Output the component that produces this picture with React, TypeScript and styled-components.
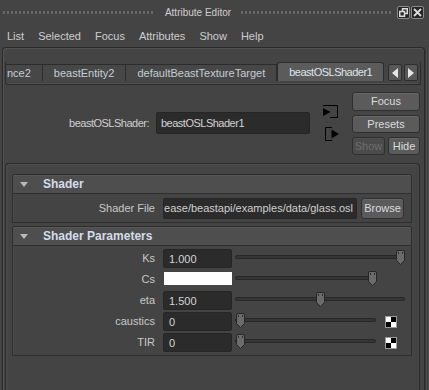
import styled, { createGlobalStyle } from 'styled-components';

const GlobalStyle = createGlobalStyle`
  html, body {
    margin: 0;
    padding: 0;
    background: #444444;
  }
  body {
    font-family: "Liberation Sans", Arial, sans-serif;
    font-size: 11px;
    color: #c8c8c8;
  }
`;

const Window = styled.div`
  width: 429px;
  height: 390px;
  overflow: hidden;
  background: #444444;
  display: flex;
  flex-direction: column;
`;

const TitleBar = styled.div`
  height: 24px;
  display: flex;
  align-items: center;
  padding: 0 5px 0 3px;
  box-sizing: border-box;
  flex-shrink: 0;
`;

const Grip = styled.div`
  flex: 1;
  height: 3px;
  background-image: repeating-linear-gradient(90deg, #686868 0 2px, transparent 2px 4px);
`;

const TitleText = styled.div`
  font-size: 10px;
  color: #cfcfcf;
  padding: 0 10px;
  white-space: nowrap;
`;

const WinBtn = styled.div<{ $first?: boolean }>`
  width: 13px;
  height: 13px;
  box-sizing: border-box;
  border: 1px solid #8a8a8a;
  border-radius: 2px;
  background: #262626;
  margin-left: ${(p) => (p.$first ? '4px' : '1px')};
  display: flex;
  align-items: center;
  justify-content: center;
`;

const MenuBar = styled.div`
  height: 23px;
  display: flex;
  align-items: center;
  gap: 14px;
  padding-left: 7px;
  flex-shrink: 0;
`;

const MenuItem = styled.span`
  color: #cdcdcd;
`;

const Body = styled.div`
  flex: 1;
  display: flex;
  min-height: 0;
`;

const Frame = styled.div`
  margin-left: 2px;
  width: 423px;
  box-sizing: border-box;
  border: 1px solid #2a2a2a;
  border-bottom: none;
  border-radius: 4px 4px 0 0;
  box-shadow: inset 1px 1px 0 #535353;
  padding: 14px 2px 0 2px;
  display: flex;
  flex-direction: column;
`;

const Gutter = styled.div`
  flex: 1;
  background: linear-gradient(90deg, #3a3a3a 0 1px, #4c4c4c 1px 2px, #3c3c3c 2px 3px, #505050 3px);
`;

const TabStrip = styled.div`
  height: 23px;
  display: flex;
  box-sizing: border-box;
  border: 1px solid #2c2c2c;
  border-top: none;
  border-radius: 0 0 3px 3px;
  box-shadow: inset 0 -1px 0 #505050;
  margin-right: 1px;
  flex-shrink: 0;
`;

const TabScroller = styled.div`
  flex: 1;
  display: flex;
  align-items: flex-start;
  overflow: hidden;
`;

const Tab = styled.div<{ $active?: boolean; $clipped?: boolean }>`
  flex-shrink: 0;
  box-sizing: border-box;
  height: ${(p) => (p.$active ? '19px' : '17px')};
  margin-top: ${(p) => (p.$active ? '0' : '2px')};
  line-height: ${(p) => (p.$active ? '18px' : '16px')};
  padding: 0 11px 0 ${(p) => (p.$clipped ? '1px' : '11px')};
  border-top: 1px solid #2c2c2c;
  border-right: 1px solid #2c2c2c;
  border-left: ${(p) => (p.$active ? '1px solid #2c2c2c' : 'none')};
  border-radius: ${(p) => (p.$active ? '3px 3px 0 0' : '0')};
  background: ${(p) => (p.$active ? '#5b5b5b' : '#474747')};
  color: ${(p) => (p.$active ? '#dfe4ea' : '#c6cdd5')};
  letter-spacing: ${(p) => (p.$active ? '-0.5px' : '0')};
  white-space: nowrap;
`;

const ArrowBtn = styled.div`
  width: 14px;
  height: 17px;
  margin: 2px 0 0 2px;
  box-sizing: border-box;
  border: 1px solid #2e2e2e;
  border-radius: 2px;
  background: #575757;
  display: flex;
  align-items: center;
  justify-content: center;
  &:last-child {
    margin-right: 2px;
  }
`;

const Arrow = styled.div<{ $dir: 'left' | 'right' }>`
  width: 0;
  height: 0;
  border-top: 5px solid transparent;
  border-bottom: 5px solid transparent;
  ${(p) => (p.$dir === 'left' ? 'border-right: 6px solid #e6e6e6;' : 'border-left: 6px solid #e6e6e6;')}
`;

const HeaderArea = styled.div`
  height: 76px;
  display: flex;
  align-items: center;
  flex-shrink: 0;
`;

const NodeLabel = styled.div`
  width: 144px;
  text-align: right;
  letter-spacing: -0.5px;
  color: #cfcfcf;
`;

const NodeField = styled.div`
  margin-left: 7px;
  width: 154px;
  height: 22px;
  box-sizing: border-box;
  background: #2b2b2b;
  border: 1px solid #252525;
  border-radius: 2px;
  padding-left: 4px;
  line-height: 20px;
  letter-spacing: -0.5px;
  color: #d2d2d2;
`;

const IconCol = styled.div`
  margin-left: 12px;
  width: 18px;
  display: flex;
  flex-direction: column;
  gap: 9px;
`;

const ButtonCol = styled.div`
  margin-left: 12px;
  width: 68px;
  display: flex;
  flex-direction: column;
  gap: 4px;
`;

const ButtonRow = styled.div`
  display: flex;
  gap: 3px;
`;

const Btn = styled.div<{ $h?: number; $w?: number; $disabled?: boolean }>`
  height: ${(p) => p.$h ?? 18}px;
  width: ${(p) => (p.$w ? `${p.$w}px` : 'auto')};
  box-sizing: border-box;
  border: 1px solid #2f2f2f;
  border-radius: 3px;
  background: ${(p) => (p.$disabled ? '#4b4b4b' : '#5b5b5b')};
  box-shadow: inset 0 1px 0 ${(p) => (p.$disabled ? '#505050' : '#666666')};
  color: ${(p) => (p.$disabled ? '#6e6e6e' : '#dcdcdc')};
  display: flex;
  align-items: center;
  justify-content: center;
  flex-shrink: 0;
`;

const BrowseBtn = styled(Btn)`
  margin-left: 4px;
`;

const ScrollFrame = styled.div`
  flex: 1;
  margin: 2px 2px 0 0;
  border: 1px solid #2b2b2b;
  border-bottom: none;
  border-radius: 4px 4px 0 0;
  box-shadow: inset 1px 1px 0 #4f4f4f;
  padding: 10px 7px 0 6px;
`;

const Section = styled.div<{ $gap?: number }>`
  margin-top: ${(p) => p.$gap ?? 0}px;
`;

const SectionHeader = styled.div`
  height: 20px;
  box-sizing: border-box;
  border: 1px solid #2e2e2e;
  border-radius: 2px 2px 0 0;
  background: #4e4e4e;
  box-shadow: inset 0 1px 0 #585858;
  display: flex;
  align-items: center;
  padding-left: 7px;
`;

const Caret = styled.div`
  width: 0;
  height: 0;
  border-left: 4px solid transparent;
  border-right: 4px solid transparent;
  border-top: 5px solid #b9b9b9;
`;

const SectionTitle = styled.div`
  margin-left: 15px;
  font-weight: bold;
  font-size: 12px;
  color: #d5dde8;
`;

const SectionBody = styled.div<{ $pad?: string }>`
  border: 1px solid #2e2e2e;
  border-top: none;
  box-shadow: inset 1px 0 0 #4c4c4c;
  padding: ${(p) => p.$pad ?? '0'};
`;

const FileRow = styled.div`
  height: 28px;
  display: flex;
  align-items: center;
`;

const AttrLabel = styled.div`
  width: 142px;
  flex-shrink: 0;
  text-align: right;
  line-height: 19px;
  color: #c8c8c8;
`;

const FileField = styled.div`
  margin-left: 8px;
  width: 194px;
  height: 21px;
  box-sizing: border-box;
  background: #2b2b2b;
  border: 1px solid #262626;
  border-radius: 2px;
  padding: 0 3px 0 1px;
  display: flex;
  justify-content: flex-end;
  overflow: hidden;
  line-height: 19px;
  white-space: nowrap;
  color: #d0d0d0;
`;

const AttrRow = styled.div`
  height: 21px;
  display: flex;
  align-items: flex-start;
`;

const ValueField = styled.div`
  margin-left: 8px;
  width: 69px;
  height: 19px;
  box-sizing: border-box;
  background: #2b2b2b;
  border: 1px solid #262626;
  border-radius: 2px;
  padding-left: 5px;
  line-height: 18px;
  color: #d4d4d4;
  flex-shrink: 0;
`;

const Swatch = styled.div`
  margin: 2px 0 0 9px;
  width: 68px;
  height: 13px;
  background: #ffffff;
  flex-shrink: 0;
`;

const SliderBox = styled.div<{ $w: number }>`
  position: relative;
  margin-left: 3px;
  width: ${(p) => p.$w}px;
  height: 19px;
  flex-shrink: 0;
`;

const Track = styled.div`
  position: absolute;
  left: 0;
  right: 0;
  top: 6px;
  height: 4px;
  box-sizing: border-box;
  background: #363636;
  border: 1px solid #272727;
  border-radius: 2px;
`;

const Thumb = styled.svg`
  position: absolute;
  top: 1px;
`;

const Checker = styled.svg`
  margin: 4px 0 0 9px;
  flex-shrink: 0;
`;

function Slider({ w, value }: { w: number; value: number }) {
  const center = 5 + value * (w - 10);
  return (
    <SliderBox $w={w}>
      <Track />
      <Thumb width="11" height="16" viewBox="0 0 11 16" style={{ left: center - 5.5 }}>
        <path
          d="M1.5 2 Q1.5 0.5 3 0.5 H8 Q9.5 0.5 9.5 2 V10.5 L5.5 14.5 L1.5 10.5 Z"
          fill="#6b6b6b"
          stroke="#262626"
        />
        <rect x="3" y="2" width="1" height="2" fill="#2e2e2e" />
        <rect x="7" y="2" width="1" height="2" fill="#2e2e2e" />
      </Thumb>
    </SliderBox>
  );
}

function MapButton() {
  return (
    <Checker width="12" height="12" viewBox="0 0 12 12">
      <rect x="0.5" y="0.5" width="11" height="11" fill="#ffffff" stroke="#9a9a9a" />
      <rect x="6" y="1" width="5" height="5" fill="#000000" />
      <rect x="1" y="6" width="5" height="5" fill="#000000" />
    </Checker>
  );
}

const params = [
  { label: 'Ks', value: '1.000', w: 170, pos: 1 },
  { label: 'Cs', color: true, w: 142, pos: 1 },
  { label: 'eta', value: '1.500', w: 170, pos: 0.5 },
  { label: 'caustics', value: '0', w: 141, pos: 0, map: true },
  { label: 'TIR', value: '0', w: 141, pos: 0, map: true },
];

export default function App() {
  return (
    <>
      <GlobalStyle />
      <Window>
        <TitleBar>
          <Grip />
          <TitleText>Attribute Editor</TitleText>
          <Grip />
          <WinBtn $first>
            <svg width="9" height="9" viewBox="0 0 9 9">
              <rect x="3.5" y="0.75" width="4.75" height="4.75" fill="none" stroke="#dcdcdc" strokeWidth="1.5" />
              <rect x="0.75" y="3.5" width="4.75" height="4.75" fill="#262626" stroke="#dcdcdc" strokeWidth="1.5" />
            </svg>
          </WinBtn>
          <WinBtn>
            <svg width="9" height="9" viewBox="0 0 9 9">
              <path d="M1 1 L8 8 M8 1 L1 8" stroke="#dcdcdc" strokeWidth="1.8" />
            </svg>
          </WinBtn>
        </TitleBar>
        <MenuBar>
          {['List', 'Selected', 'Focus', 'Attributes', 'Show', 'Help'].map((m) => (
            <MenuItem key={m}>{m}</MenuItem>
          ))}
        </MenuBar>
        <Body>
          <Frame>
            <TabStrip>
              <TabScroller>
                <Tab $clipped>nce2</Tab>
                <Tab>beastEntity2</Tab>
                <Tab>defaultBeastTextureTarget</Tab>
                <Tab $active>beastOSLShader1</Tab>
              </TabScroller>
              <ArrowBtn>
                <Arrow $dir="left" />
              </ArrowBtn>
              <ArrowBtn>
                <Arrow $dir="right" />
              </ArrowBtn>
            </TabStrip>
            <HeaderArea>
              <NodeLabel>beastOSLShader:</NodeLabel>
              <NodeField>beastOSLShader1</NodeField>
              <IconCol>
                <svg width="18" height="13" viewBox="0 0 18 13">
                  <path d="M1 0.5 H15.5 V12.5 H8" fill="none" stroke="#000" />
                  <path d="M1 3 L8.5 7 L1 11 Z" fill="#000" />
                </svg>
                <svg width="18" height="14" viewBox="0 0 18 14">
                  <path d="M10 0.5 H3.5 V13.5 H10" fill="none" stroke="#000" />
                  <path d="M9.5 2.5 L17 7 L9.5 11.5 Z" fill="#000" />
                </svg>
              </IconCol>
              <ButtonCol>
                <Btn $h={19}>Focus</Btn>
                <Btn>Presets</Btn>
                <ButtonRow>
                  <Btn $w={33} $disabled>
                    Show
                  </Btn>
                  <Btn $w={32}>Hide</Btn>
                </ButtonRow>
              </ButtonCol>
            </HeaderArea>
            <ScrollFrame>
              <Section>
                <SectionHeader>
                  <Caret />
                  <SectionTitle>Shader</SectionTitle>
                </SectionHeader>
                <SectionBody>
                  <FileRow>
                    <AttrLabel>Shader File</AttrLabel>
                    <FileField>ease/beastapi/examples/data/glass.osl</FileField>
                    <BrowseBtn $h={21} $w={43}>
                      Browse
                    </BrowseBtn>
                  </FileRow>
                </SectionBody>
              </Section>
              <Section $gap={3}>
                <SectionHeader>
                  <Caret />
                  <SectionTitle>Shader Parameters</SectionTitle>
                </SectionHeader>
                <SectionBody $pad="3px 0 1px">
                  {params.map((p) => (
                    <AttrRow key={p.label}>
                      <AttrLabel>{p.label}</AttrLabel>
                      {p.color ? <Swatch /> : <ValueField>{p.value}</ValueField>}
                      <Slider w={p.w} value={p.pos} />
                      {p.map && <MapButton />}
                    </AttrRow>
                  ))}
                </SectionBody>
              </Section>
            </ScrollFrame>
          </Frame>
          <Gutter />
        </Body>
      </Window>
    </>
  );
}
